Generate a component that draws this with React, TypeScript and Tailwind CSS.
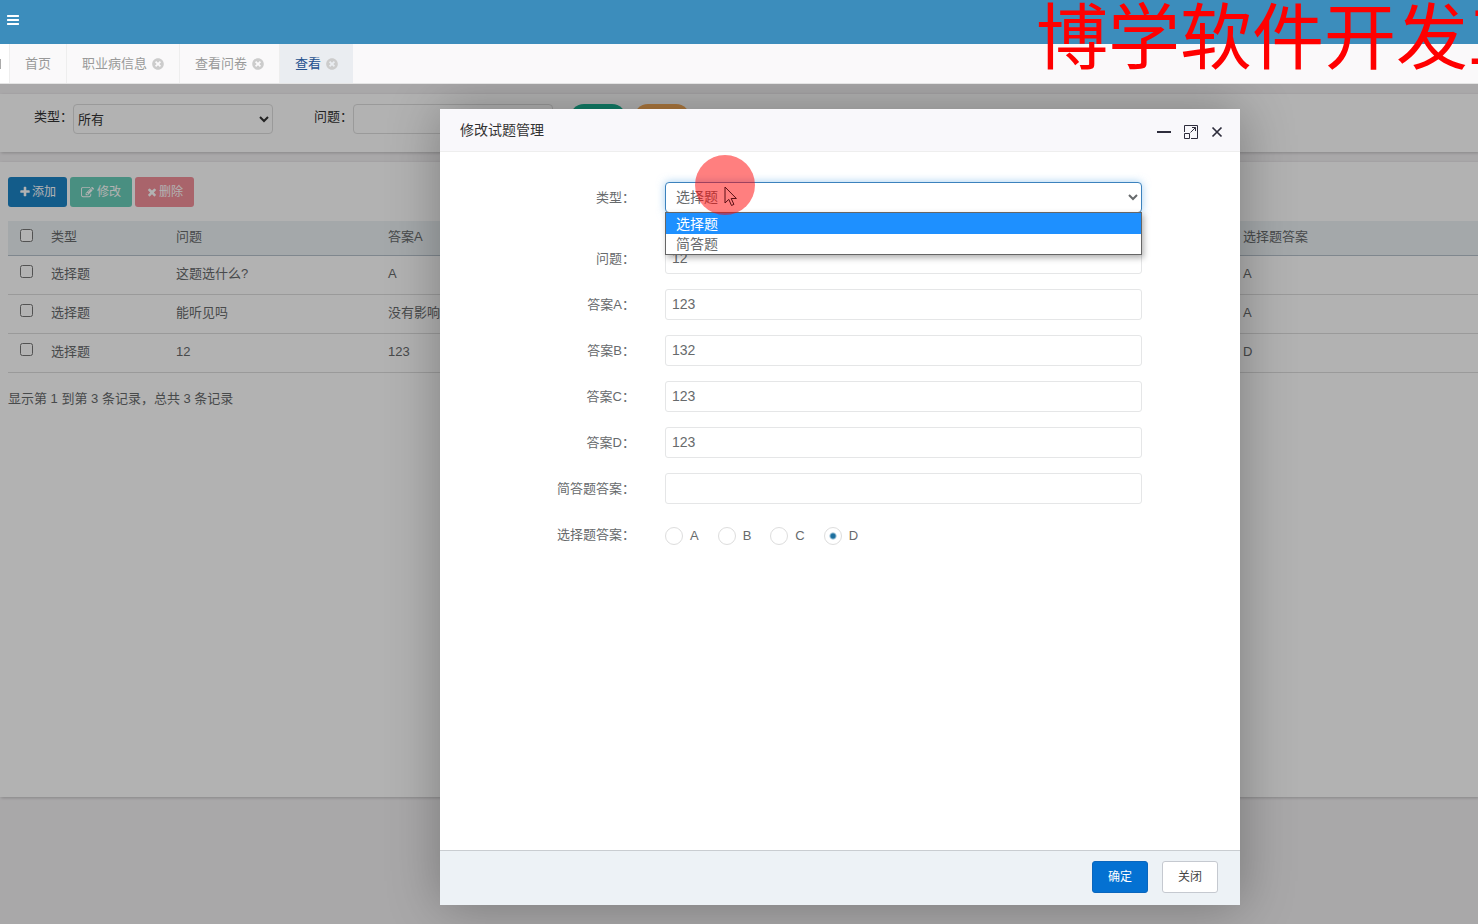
import { FaTimesCircle } from "react-icons/fa";

const icons = {
  bars: "M1664 1344v128q0 26-19 45t-45 19h-1408q-26 0-45-19t-19-45v-128q0-26 19-45t45-19h1408q26 0 45 19t19 45zm0-512v128q0 26-19 45t-45 19h-1408q-26 0-45-19t-19-45v-128q0-26 19-45t45-19h1408q26 0 45 19t19 45zm0-512v128q0 26-19 45t-45 19h-1408q-26 0-45-19t-19-45v-128q0-26 19-45t45-19h1408q26 0 45 19t19 45z",
  plus: "M1600 736v192q0 40-28 68t-68 28h-416v416q0 40-28 68t-68 28h-192q-40 0-68-28t-28-68v-416h-416q-40 0-68-28t-28-68v-192q0-40 28-68t68-28h416v-416q0-40 28-68t68-28h192q40 0 68 28t28 68v416h416q40 0 68 28t28 68z",
  edit: "M888 1184l116-116-152-152-116 116v56h96v96h56zm440-720q-16-16-33 1l-350 350q-17 17-1 33t33-1l350-350q17-17 1-33zm80 594v190q0 119-84.5 203.5t-203.5 84.5h-832q-119 0-203.5-84.5t-84.5-203.5v-832q0-119 84.5-203.5t203.5-84.5h832q63 0 117 25 15 7 18 23 3 17-9 29l-49 49q-14 14-32 8-23-6-45-6h-832q-66 0-113 47t-47 113v832q0 66 47 113t113 47h832q66 0 113-47t47-113v-126q0-13 9-22l64-64q15-15 35-7t20 29zm-96-738l288 288-672 672h-288v-288zm444 132l-92 92-288-288 92-92q28-28 68-28t68 28l152 152q28 28 28 68t-28 68z",
  times: "M1490 1322q0 40-28 68l-136 136q-28 28-68 28t-68-28l-294-294-294 294q-28 28-68 28t-68-28l-136-136q-28-28-28-68t28-68l294-294-294-294q-28-28-28-68t28-68l136-136q28-28 68-28t68 28l294 294 294-294q28-28 68-28t68 28l136 136q28 28 28 68t-28 68l-294 294 294 294q28 28 28 68z",
};

const tabs = [
  { name: "首页", closable: false, active: false },
  { name: "职业病信息", closable: true, active: false },
  { name: "查看问卷", closable: true, active: false },
  { name: "查看", closable: true, active: true },
];

const rows = [
  { type: "选择题", question: "这题选什么?", a: "A", answer: "A" },
  { type: "选择题", question: "能听见吗", a: "没有影响", answer: "A" },
  { type: "选择题", question: "12", a: "123", answer: "D" },
];

const fields = [
  { id: "question", label: "问题：", value: "12" },
  { id: "answerA", label: "答案A：", value: "123" },
  { id: "answerB", label: "答案B：", value: "132" },
  { id: "answerC", label: "答案C：", value: "123" },
  { id: "answerD", label: "答案D：", value: "123" },
  { id: "shortAnswer", label: "简答题答案：", value: "" },
];

const choices = ["A", "B", "C", "D"];

function Icon({ name, className }: { name: keyof typeof icons; className: string }) {
  return (
    <svg viewBox="0 0 1792 1792" fill="currentColor" aria-hidden="true" className={className}>
      <path d={icons[name]} />
    </svg>
  );
}

function TopBar() {
  return (
    <header className="flex h-11 items-center bg-[#3c8dbc] px-[6px] pb-1 text-white">
      <button type="button" aria-label="菜单">
        <Icon name="bars" className="size-[14px]" />
      </button>
    </header>
  );
}

function TabBar() {
  return (
    <nav className="flex h-10 border-b border-[#e4e4e4] bg-[#faf9fa] text-[13px] text-[#999]">
      <div className="flex w-[10px] items-center border-r border-[#eee] bg-white">
        <span className="h-[10px] w-px bg-[#aaa]" />
      </div>
      {tabs.map((tab) => (
        <div
          key={tab.name}
          className={
            tab.active
              ? "flex items-center gap-[5px] bg-[#eaedf1] px-[15px] text-[#23508e]"
              : "flex items-center gap-[5px] border-r border-[#eee] px-[15px]"
          }
        >
          <a href="#" className="leading-5">
            {tab.name}
          </a>
          {tab.closable && (
            <button type="button" aria-label="关闭标签" className="text-[#ccc]">
              <FaTimesCircle className="size-[12px]" />
            </button>
          )}
        </div>
      ))}
    </nav>
  );
}

function SearchPanel() {
  return (
    <form className="flex h-[58px] items-start bg-white px-[34px] pt-[10px] text-[13px] text-[#333] shadow-[1px_1px_3px_rgba(0,0,0,0.2)]">
      <label htmlFor="searchType" className="leading-[26px]">
        类型：
      </label>
      <select
        id="searchType"
        className="mr-[41px] h-[30px] w-[200px] rounded border border-[#ddd] bg-white text-[13px]"
      >
        <option>所有</option>
      </select>
      <label htmlFor="searchQuestion" className="leading-[26px]">
        问题：
      </label>
      <input
        id="searchQuestion"
        className="mr-[17px] h-[30px] w-[200px] rounded border border-[#ddd] bg-white px-1"
      />
      <button
        type="button"
        aria-label="搜索"
        className="mr-2 h-[28px] w-[56px] rounded-full bg-[#1ab394]"
      />
      <button
        type="button"
        aria-label="重置"
        className="h-[28px] w-[56px] rounded-full bg-[#f8ac59]"
      />
    </form>
  );
}

function ListPanel() {
  return (
    <section className="mt-[10px] mb-[127px] flex-1 bg-white pt-[15px] pl-2 shadow-[1px_1px_3px_rgba(0,0,0,0.2)]">
      <div className="flex gap-[3px] text-[12px] text-white">
        <button
          type="button"
          className="flex h-[30px] w-[59px] items-center justify-center gap-px rounded-[3px] bg-[#1c84c6]"
        >
          <Icon name="plus" className="size-[12px]" />
          添加
        </button>
        <button
          type="button"
          disabled
          className="flex h-[30px] w-[62px] items-center justify-center gap-[3px] rounded-[3px] bg-[#1ab394] opacity-65"
        >
          <Icon name="edit" className="size-[13px]" />
          修改
        </button>
        <button
          type="button"
          disabled
          className="flex h-[30px] w-[59px] items-center justify-center gap-px rounded-[3px] bg-[#ed5565] opacity-65"
        >
          <Icon name="times" className="size-[12px]" />
          删除
        </button>
      </div>

      <table className="mt-[14px] w-full table-fixed text-left text-[13px]">
        <colgroup>
          <col className="w-[35px]" />
          <col className="w-[125px]" />
          <col className="w-[212px]" />
          <col className="w-[855px]" />
          <col />
        </colgroup>
        <thead>
          <tr className="h-[34px] border-b border-[#b6c2cc] bg-[#ebf1f4]">
            <th className="pb-1 pl-3">
              <input type="checkbox" aria-label="全选" className="block size-[13px]" />
            </th>
            <th className="px-2 pb-[2px] font-normal">类型</th>
            <th className="px-2 pb-[2px] font-normal">问题</th>
            <th className="px-2 pb-[2px] font-normal">答案A</th>
            <th className="px-2 pb-[2px] font-normal">选择题答案</th>
          </tr>
        </thead>
        <tbody>
          {rows.map((row) => (
            <tr key={row.question} className="h-[39px] border-b border-[#ddd]">
              <td className="pb-[6px] pl-3">
                <input type="checkbox" aria-label={row.question} className="block size-[13px]" />
              </td>
              <td className="px-2 pb-[2px]">{row.type}</td>
              <td className="px-2 pb-[2px]">{row.question}</td>
              <td className="px-2 pb-[2px]">{row.a}</td>
              <td className="px-2 pb-[2px]">{row.answer}</td>
            </tr>
          ))}
        </tbody>
      </table>
      <p className="mt-4 text-[13px] leading-5">显示第 1 到第 3 条记录，总共 3 条记录</p>
    </section>
  );
}

function Pointer() {
  return (
    <div className="pointer-events-none absolute -top-[27px] left-[30px] z-20 size-[60px] rounded-full bg-[#ff0000]/50">
      <svg
        viewBox="0 0 14 22"
        className="absolute top-[31px] left-[29px] h-[22px] w-[14px]"
        fill="none"
        stroke="#5a0f14"
        strokeWidth="1"
      >
        <path d="M1 1v16l3.8-3.6 2.7 6.1 2.4-1.1-2.7-5.9h5.2z" />
      </svg>
    </div>
  );
}

function EditDialog() {
  return (
    <div
      role="dialog"
      aria-labelledby="dialogTitle"
      className="flex w-[800px] flex-col bg-white shadow-[1px_1px_50px_rgba(0,0,0,0.3)]"
    >
      <div className="flex h-[43px] items-center justify-between border-b border-[#eee] bg-[#f9f8fb] pr-[17px] pl-5 text-[#333]">
        <h2 id="dialogTitle" className="text-[14px]">
          修改试题管理
        </h2>
        <div className="flex items-center gap-[13px] pt-[3px]">
          <button type="button" aria-label="最小化">
            <svg viewBox="0 0 14 14" className="size-[14px]">
              <path d="M0 7h14" stroke="#2e2d3c" strokeWidth="2" />
            </svg>
          </button>
          <button type="button" aria-label="最大化">
            <svg viewBox="0 0 14 14" className="size-[14px]" fill="none" stroke="#2e2d3c">
              <path d="M.5 7V.5h13v13H7M.5 8.5h5v5h-5zM6.5 7.5l5-5M8 2.5h3.5V6" />
            </svg>
          </button>
          <button type="button" aria-label="关闭窗口">
            <svg viewBox="0 0 12 12" className="size-[12px]">
              <path d="M1.5 1.5l9 9M10.5 1.5l-9 9" stroke="#2e2d3c" strokeWidth="1.7" />
            </svg>
          </button>
        </div>
      </div>

      <form className="flex-1 px-5 pt-[30px] text-[13px]">
        <div className="mb-[30px] flex items-center">
          <label htmlFor="type" className="w-1/4 pr-[15px] text-right">
            类型：
          </label>
          <div className="w-2/3 px-[15px]">
            <div className="relative">
              <select
                id="type"
                className="block h-[31px] w-full rounded border border-[#3c82bd] bg-white px-[6px] pb-[2px] text-[14px] shadow-[0_0_8px_rgba(102,175,233,0.6)]"
              >
                <option>选择题</option>
                <option>简答题</option>
              </select>
              <ul className="absolute inset-x-0 top-[30px] z-10 border border-[#666] bg-white text-[14px] leading-5 shadow-[2px_3px_6px_rgba(0,0,0,0.3)]">
                <li className="bg-[#1e90ff] px-[10px] pt-px text-white">选择题</li>
                <li className="px-[10px]">简答题</li>
              </ul>
              <Pointer />
            </div>
          </div>
        </div>

        {fields.map((field) => (
          <div key={field.id} className="mb-[15px] flex items-center">
            <label htmlFor={field.id} className="w-1/4 pr-[15px] text-right">
              {field.label}
            </label>
            <div className="w-2/3 px-[15px]">
              <input
                id={field.id}
                defaultValue={field.value}
                className="block h-[31px] w-full rounded-[3px] border border-[#e5e6e7] bg-white px-[6px] pb-[2px] text-[14px]"
              />
            </div>
          </div>
        ))}

        <fieldset className="flex h-[31px] items-center">
          <legend className="float-left w-1/4 pr-[15px] text-right">选择题答案：</legend>
          <div className="flex w-2/3 gap-[19px] px-[15px] pt-[3px]">
            {choices.map((choice) => (
              <label key={choice} className="flex items-center gap-[7px]">
                <input
                  type="radio"
                  name="choice"
                  defaultChecked={choice === "D"}
                  className="size-[18px] appearance-none rounded-full border border-[#ddd] bg-white checked:bg-[radial-gradient(circle,#1c6f9f_2px,#fff_4px)]"
                />
                {choice}
              </label>
            ))}
          </div>
        </fieldset>
      </form>

      <div className="flex h-[55px] justify-end gap-[14px] border-t border-[#c9cdd1] bg-[#edf2f6] pt-[10px] pr-[22px] text-[12px]">
        <button
          type="button"
          className="h-8 w-14 rounded-[3px] border border-[#0a66bd] bg-[#0471d2] text-white"
        >
          确定
        </button>
        <button
          type="button"
          className="h-8 w-14 rounded-[3px] border border-[#c5c9d0] bg-white text-[#444]"
        >
          关闭
        </button>
      </div>
    </div>
  );
}

export default function App() {
  return (
    <div
      lang="zh-CN"
      className="relative flex min-h-screen flex-col overflow-hidden bg-[#f3f1f3] font-['Liberation_Sans','Noto_Sans_CJK_SC',sans-serif] text-[#676a6c]"
    >
      <TopBar />
      <TabBar />
      <main className="relative flex flex-1 flex-col overflow-hidden pt-[10px]">
        <SearchPanel />
        <ListPanel />
        <div className="absolute inset-0 flex justify-end bg-black/30 pt-[25px] pr-[238px] pb-[19px]">
          <EditDialog />
        </div>
      </main>
      <div className="pointer-events-none absolute top-0 right-0 w-[442px] overflow-hidden text-[72px] leading-[76px] whitespace-nowrap text-[#ff0000]">
        博学软件开发工
      </div>
    </div>
  );
}
